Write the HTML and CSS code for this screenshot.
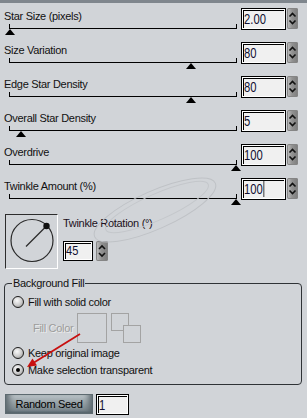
FILE: index.html
```html
<!DOCTYPE html>
<html lang="en">
<head>
	<meta charset="UTF-8">
	<title>Star Field settings</title>
	<link rel="stylesheet" href="styles.css">
</head>
<body>
	<div class="topbar"></div>

	<div class="panel">
		<div class="row">
			<div class="field">
				<div class="label">Star Size (pixels)</div>
				<div class="track"><span class="thumb" style="left: calc(0% - 5px)"></span></div>
			</div>
			<div class="num"><span>2.00</span></div>
			<span class="spin"><svg width="11" height="21" viewBox="0 0 11 21"><path d="M2.5 8.5 L5.5 5.5 L8.5 8.5 M2.5 12.5 L5.5 15.5 L8.5 12.5" fill="none" stroke="#111" stroke-width="1.6"/></svg></span>
		</div>

		<div class="row">
			<div class="field">
				<div class="label">Size Variation</div>
				<div class="track"><span class="thumb" style="left: calc(80% - 5px)"></span></div>
			</div>
			<div class="num"><span>80</span></div>
			<span class="spin"><svg width="11" height="21" viewBox="0 0 11 21"><path d="M2.5 8.5 L5.5 5.5 L8.5 8.5 M2.5 12.5 L5.5 15.5 L8.5 12.5" fill="none" stroke="#111" stroke-width="1.6"/></svg></span>
		</div>

		<div class="row">
			<div class="field">
				<div class="label">Edge Star Density</div>
				<div class="track"><span class="thumb" style="left: calc(80% - 5px)"></span></div>
			</div>
			<div class="num"><span>80</span></div>
			<span class="spin"><svg width="11" height="21" viewBox="0 0 11 21"><path d="M2.5 8.5 L5.5 5.5 L8.5 8.5 M2.5 12.5 L5.5 15.5 L8.5 12.5" fill="none" stroke="#111" stroke-width="1.6"/></svg></span>
		</div>

		<div class="row">
			<div class="field">
				<div class="label">Overall Star Density</div>
				<div class="track"><span class="thumb" style="left: calc(5% - 5px)"></span></div>
			</div>
			<div class="num"><span>5</span></div>
			<span class="spin"><svg width="11" height="21" viewBox="0 0 11 21"><path d="M2.5 8.5 L5.5 5.5 L8.5 8.5 M2.5 12.5 L5.5 15.5 L8.5 12.5" fill="none" stroke="#111" stroke-width="1.6"/></svg></span>
		</div>

		<div class="row">
			<div class="field">
				<div class="label">Overdrive</div>
				<div class="track"><span class="thumb" style="left: calc(100% - 5px)"></span></div>
			</div>
			<div class="num"><span>100</span></div>
			<span class="spin"><svg width="11" height="21" viewBox="0 0 11 21"><path d="M2.5 8.5 L5.5 5.5 L8.5 8.5 M2.5 12.5 L5.5 15.5 L8.5 12.5" fill="none" stroke="#111" stroke-width="1.6"/></svg></span>
		</div>

		<div class="row">
			<div class="field">
				<div class="label">Twinkle Amount (%)</div>
				<div class="track"><span class="thumb" style="left: calc(100% - 5px)"></span></div>
			</div>
			<div class="num"><span>100<i class="caret"></i></span></div>
			<span class="spin"><svg width="11" height="21" viewBox="0 0 11 21"><path d="M2.5 8.5 L5.5 5.5 L8.5 8.5 M2.5 12.5 L5.5 15.5 L8.5 12.5" fill="none" stroke="#111" stroke-width="1.6"/></svg></span>
		</div>

		<div class="rot">
			<div class="dial">
				<svg width="51" height="53" viewBox="0 0 51 53">
					<circle cx="26" cy="25.5" r="21" fill="none" stroke="#2a2a2a" stroke-width="1.2"/>
					<line x1="20" y1="31.5" x2="40" y2="11.5" stroke="#2a2a2a" stroke-width="1.2"/>
					<circle cx="40.5" cy="11" r="3.2" fill="#111"/>
				</svg>
			</div>
			<div class="rot-side">
				<div class="label">Twinkle Rotation (°)</div>
				<div class="rot-input">
					<div class="num small"><span>45</span></div>
					<span class="spin wide"><svg width="12" height="20" viewBox="0 0 12 20"><path d="M3 8 L6 5 L9 8 M3 12 L6 15 L9 12" fill="none" stroke="#111" stroke-width="1.6"/></svg></span>
				</div>
			</div>
		</div>

		<fieldset class="group">
			<legend>Background Fill</legend>
			<div class="opt first"><span class="radio"></span>Fill with solid color</div>
			<div class="fill">
				<span class="fill-label">Fill Color</span>
				<span class="swatch"></span>
				<span class="swap"><span class="sq"></span><span class="sq back"></span></span>
			</div>
			<div class="opt"><span class="radio"></span>Keep original image</div>
			<div class="opt"><span class="radio on"></span>Make selection transparent</div>
		</fieldset>

		<div class="seed">
			<button class="btn">Random Seed</button>
			<div class="num seed-num"><span>1</span></div>
		</div>
	</div>

	<svg class="overlay" width="307" height="418" viewBox="0 0 307 418">
		<ellipse cx="155" cy="210" rx="66" ry="19" transform="rotate(-24 155 210)" fill="none" stroke="#bfc2c6" stroke-width="1"/>
		<ellipse cx="157" cy="207" rx="56" ry="13" transform="rotate(-24 157 207)" fill="none" stroke="#c4c7cb" stroke-width="1"/>
		<line x1="80" y1="334" x2="34" y2="362.5" stroke="#c81010" stroke-width="1.8"/>
		<polygon points="27,367 37,365.5 32.5,358.5" fill="#c81010"/>
	</svg>
</body>
</html>
```

FILE: styles.css
```css
body {
	margin: 0;
	position: relative;
	width: 307px;
	height: 418px;
	overflow: hidden;
	background: #d1d4d8;
	color: #111;
	font-family: "Liberation Sans", Arial, sans-serif;
	font-size: 11px;
}

.topbar {
	height: 3px;
	background: #7f868d;
}

.panel {
	padding: 5px 9px 0 4px;
}

.row {
	display: flex;
	align-items: flex-start;
	height: 34px;
}

.field {
	width: 237px;
}

.label {
	line-height: 14px;
	padding-top: 1px;
	letter-spacing: -0.3px;
	white-space: nowrap;
}

.track {
	position: relative;
	margin: 1px 0 0 5px;
	width: 226px;
	height: 4px;
	border: 1px solid #000;
	border-top: 0;
}

.thumb {
	position: absolute;
	top: 5px;
	width: 0;
	height: 0;
	border-left: 5px solid transparent;
	border-right: 5px solid transparent;
	border-bottom: 6px solid #000;
}

.num {
	width: 45px;
	height: 22px;
	box-sizing: border-box;
	border: 1px solid #000;
	box-shadow: inset 0 0 0 1px #fff, inset 2px 2px 0 #000;
	background: #f0f0f0;
	padding-left: 2px;
	overflow: hidden;
	font-size: 15px;
	line-height: 20px;
	white-space: nowrap;
}

.num span {
	display: inline-block;
	transform: scaleX(0.75);
	transform-origin: 0 50%;
	color: #101030;
}

.caret {
	display: inline-block;
	width: 1.34px;
	height: 16px;
	margin-left: 1px;
	vertical-align: -3px;
	background: #000;
}

.spin {
	display: block;
	width: 11px;
	height: 21px;
	margin-left: 1px;
	border-radius: 2px;
	background: linear-gradient(to right, #c2c2c2, #929292 45%, #7c7c7c);
	box-shadow: inset 0 0 0 1px #858585;
}

.spin svg {
	display: block;
}

.rot {
	display: flex;
	margin-top: 2px;
}

.dial {
	width: 51px;
	height: 53px;
	margin-left: 1px;
	border: 1px solid #fff;
	border-top-color: #2c2c2c;
	border-left-color: #2c2c2c;
}

.dial svg {
	display: block;
}

.rot-side {
	margin-left: 5px;
}

.rot-side .label {
	padding-top: 2px;
	color: #201020;
}

.rot-input {
	display: flex;
	align-items: center;
	margin-top: 11px;
}

.num.small {
	width: 30px;
	height: 20px;
	font-size: 13px;
	line-height: 18px;
}

.num.small span {
	transform: scaleX(0.85);
}

.spin.wide {
	width: 12px;
	height: 20px;
	margin-left: 3px;
}

.group {
	width: 298px;
	box-sizing: border-box;
	margin: 8px 0 0;
	padding: 0 0 7px 7px;
	min-width: 0;
	border: 1px solid #2f3236;
	border-radius: 4px;
}

.group legend {
	padding: 0 1px;
	line-height: 13px;
	letter-spacing: -0.3px;
}

.opt {
	display: flex;
	align-items: center;
	line-height: 14px;
	margin-top: 3px;
	letter-spacing: -0.3px;
	white-space: nowrap;
}

.opt.first {
	margin-top: 5px;
}

.radio {
	position: relative;
	width: 12px;
	height: 12px;
	box-sizing: border-box;
	margin-right: 4px;
	border: 1px solid #1c1c1c;
	border-radius: 50%;
	background: radial-gradient(circle at 40% 35%, #fafafa 0, #cfcfcf 50%, #8a8a8a 100%);
}

.radio.on::after {
	content: "";
	position: absolute;
	left: 3px;
	top: 3px;
	width: 4px;
	height: 4px;
	border-radius: 50%;
	background: #000;
}

.fill {
	display: flex;
	align-items: center;
	margin-top: 3px;
	padding-left: 21px;
}

.fill-label {
	width: 44px;
	letter-spacing: -0.3px;
	color: #9c9c9c;
	text-shadow: 1px 1px 0 #ececec;
}

.swatch {
	width: 30px;
	height: 30px;
	box-sizing: border-box;
	border: 1px solid #a3a3a3;
}

.swap {
	position: relative;
	align-self: flex-start;
	width: 30px;
	height: 31px;
	margin-left: 4px;
}

.sq {
	position: absolute;
	left: 0;
	top: 1px;
	width: 18px;
	height: 18px;
	box-sizing: border-box;
	border: 1px solid #a3a3a3;
}

.sq.back {
	left: 12px;
	top: 13px;
	background: #d1d4d8;
}

.seed {
	display: flex;
	align-items: flex-start;
	margin: 9px 0 0 1px;
}

.btn {
	width: 88px;
	height: 20px;
	padding: 0;
	border: 1px solid #5d6a70;
	background: linear-gradient(to bottom, #c5ccd0 0, #a8b2b6 22%, #909ba0 55%, #79868c 85%, #55626a 100%);
	box-shadow: inset 7px 0 6px -4px #59656b, inset -7px 0 6px -4px #59656b;
	color: #000;
	font-family: "Liberation Sans", Arial, sans-serif;
	font-size: 11px;
	letter-spacing: -0.3px;
}

.seed-num {
	width: 33px;
	height: 21px;
	margin-left: 3px;
	line-height: 19px;
}

.overlay {
	position: absolute;
	left: 0;
	top: 0;
	pointer-events: none;
}
```
